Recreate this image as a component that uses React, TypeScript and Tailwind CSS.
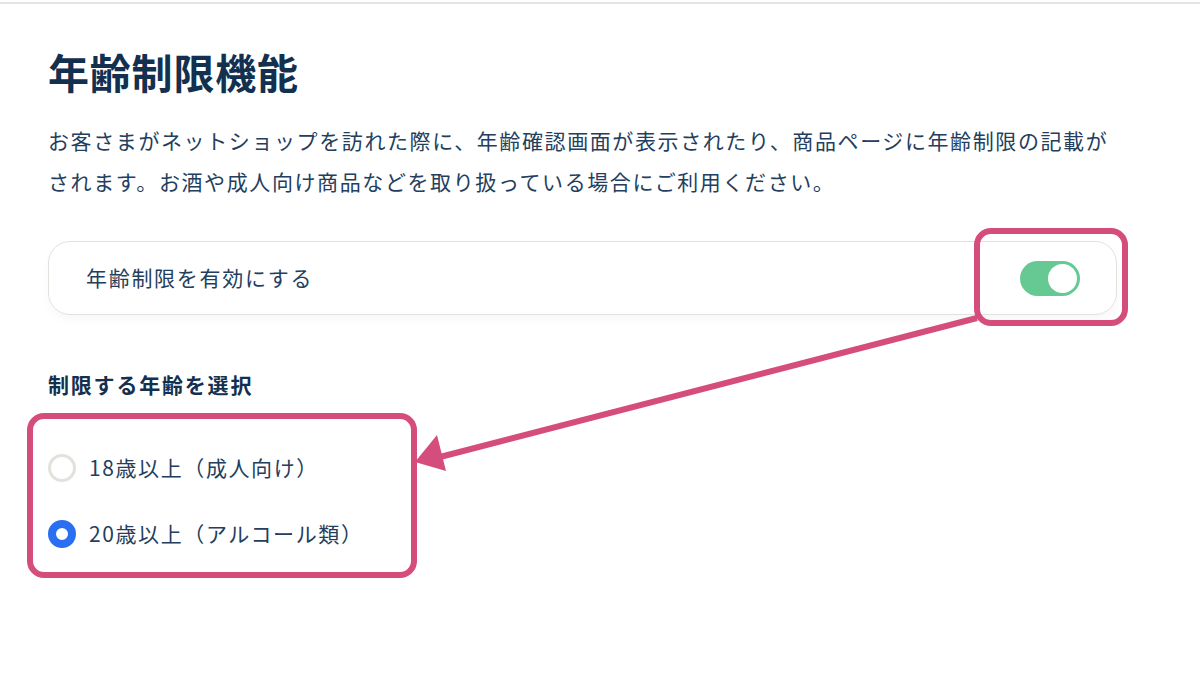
import React, { useState } from 'react';

const font = { fontFamily: '"Noto Sans CJK JP", "Noto Sans", sans-serif' };

const options = [
  { id: '18', label: '18歳以上（成人向け）' },
  { id: '20', label: '20歳以上（アルコール類）' },
];

export default function App() {
  const [enabled, setEnabled] = useState(true);
  const [age, setAge] = useState('20');

  return (
    <div className="relative w-full h-[674px] bg-white overflow-hidden" style={font}>
      <div className="mt-[2px] border-t-2 border-[#e4e4e2]" />

      <div className="pl-[48px] pr-[83px]">
        <h1 className="mt-[43px] text-[41px] leading-[49px] font-bold text-[#13304f] tracking-[0.8px]">
          年齢制限機能
        </h1>

        <p className="mt-[24px] text-[21px] leading-[41px] text-[#243e5d] tracking-[1.6px]">
          お客さまがネットショップを訪れた際に、年齢確認画面が表示されたり、商品ページに年齢制限の記載がされます。お酒や成人向け商品などを取り扱っている場合にご利用ください。
        </p>

        <div className="mt-[39px] h-[74px] flex items-center justify-between pl-[37px] pr-[36px] rounded-[22px] border border-[#e2e2dd] shadow-[0_5px_8px_rgba(0,0,0,0.03)]">
          <span className="text-[21px] text-[#243e5d] tracking-[1.7px]">年齢制限を有効にする</span>
          <button
            type="button"
            onClick={() => setEnabled(!enabled)}
            className={`w-[60px] h-[35px] rounded-full p-[3px] flex items-center ${
              enabled ? 'bg-[#66c994] justify-end' : 'bg-[#d9d9d6] justify-start'
            }`}
          >
            <span className="block w-[29px] h-[29px] rounded-full bg-white" />
          </button>
        </div>

        <h2 className="mt-[54px] text-[21px] leading-[30px] font-bold text-[#13304f] tracking-[1.8px]">
          制限する年齢を選択
        </h2>

        <div className="mt-[55px] flex flex-col gap-[38px]">
          {options.map((o) => (
            <label key={o.id} className="flex items-center gap-[13px] h-[28px] cursor-pointer">
              <span
                onClick={() => setAge(o.id)}
                className={`block w-[28px] h-[28px] rounded-full bg-white ${
                  age === o.id ? 'border-[8px] border-[#2a6ef2]' : 'border-[3px] border-[#e2e2dd]'
                }`}
              />
              <span className="text-[21px] text-[#243e5d] tracking-[1.6px]">{o.label}</span>
            </label>
          ))}
        </div>
      </div>

      {/* annotation overlay */}
      <svg className="absolute inset-0 pointer-events-none" width="1200" height="674" viewBox="0 0 1200 674">
        <rect x="977" y="231" width="148" height="92" rx="14" fill="none" stroke="#d54d7c" strokeWidth="6" />
        <rect x="30" y="416" width="384" height="159" rx="14" fill="none" stroke="#d54d7c" strokeWidth="6" />
        <line x1="977" y1="318" x2="440" y2="457" stroke="#d54d7c" strokeWidth="6" />
        <polygon points="415,462 437,435 446,471" fill="#d54d7c" />
      </svg>
    </div>
  );
}
